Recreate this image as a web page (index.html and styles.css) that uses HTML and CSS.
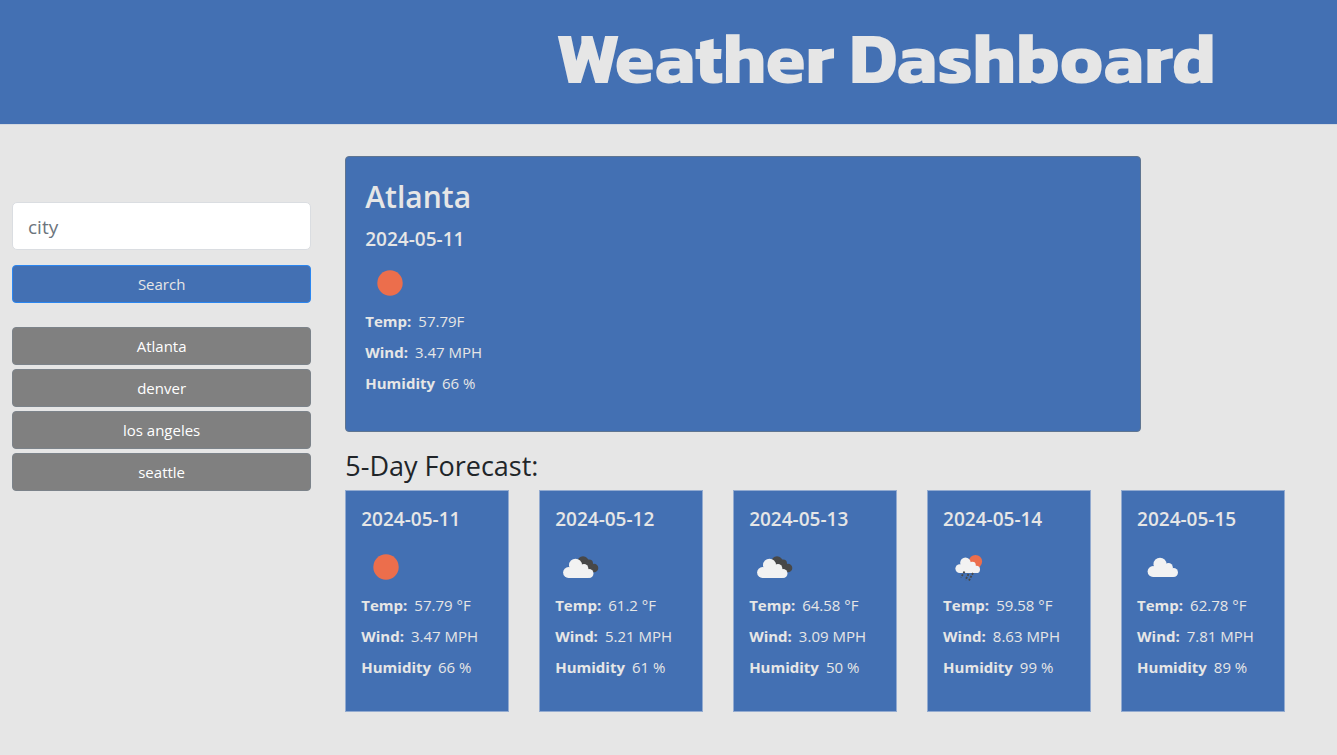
FILE: index.html
```html
<!DOCTYPE html>
<html lang="en">
<head>
<meta charset="utf-8">
<meta name="viewport" content="width=device-width, initial-scale=1">
<title>Weather Dashboard</title>
<link rel="stylesheet" href="styles.css">
</head>
<body>
<svg class="sprite" aria-hidden="true">
  <defs>
    <g id="puff"><circle cx="16" cy="29.500" r="5.400"/><circle cx="23" cy="22.200" r="6.500"/><circle cx="31.500" cy="25.300" r="4.300"/><circle cx="36.500" cy="30.500" r="4.500"/><path d="M16 35V27l3-5h8l5 2 4 5.500V35z"/></g>
  </defs>
  <symbol id="sun" viewBox="0 0 50 50"><circle cx="25" cy="25" r="12.7" fill="#ec6e4c"/></symbol>
  <symbol id="cloud" viewBox="0 0 50 50"><use href="#puff" fill="#f2f2f2"/></symbol>
  <symbol id="clouds" viewBox="0 0 50 50"><g fill="#484848"><circle cx="28" cy="20" r="5.800"/><circle cx="34" cy="21.500" r="4"/><circle cx="39" cy="26" r="4.300"/><path d="M27 20l8-1 5 11H28z"/></g><use href="#puff" fill="#f2f2f2" transform="translate(-2.500 1)"/></symbol>
  <symbol id="rain" viewBox="0 0 50 50"><circle cx="32.500" cy="19.500" r="6.600" fill="#ec6e4c"/><use href="#puff" fill="#f2f2f2" transform="translate(3.800 2.700) scale(.81)"/><path stroke="#484848" stroke-width="1.800" stroke-dasharray="2 1.300" fill="none" d="M21.500 29.500l-3.500 6M25.500 32l-3 6M30 31l-4 7.500"/></symbol>
</svg>
<header class="site-header"><h1 class="site-title">Weather Dashboard</h1></header>
<div class="layout">
  <aside class="sidebar">
    <form class="search">
      <input class="city-input" type="text" placeholder="city" aria-label="city">
      <button class="btn btn-search" type="button">Search</button>
    </form>
    <div class="history">
      <button class="btn" type="button">Atlanta</button>
      <button class="btn" type="button">denver</button>
      <button class="btn" type="button">los angeles</button>
      <button class="btn" type="button">seattle</button>
    </div>
  </aside>
  <main class="content">
    <section class="current">
      <h2 class="city">Atlanta</h2>
      <h3 class="date">2024-05-11</h3>
      <svg class="icon"><use href="#sun"/></svg>
      <p class="stat"><b>Temp:</b><span>57.79F</span></p>
      <p class="stat"><b>Wind:</b><span>3.47 MPH</span></p>
      <p class="stat"><b>Humidity</b><span>66 %</span></p>
    </section>
    <h2 class="forecast-title">5-Day Forecast:</h2>
    <section class="forecast">
      <article class="day">
        <h3 class="date">2024-05-11</h3>
        <svg class="icon"><use href="#sun"/></svg>
        <p class="stat"><b>Temp:</b><span>57.79 °F</span></p>
        <p class="stat"><b>Wind:</b><span>3.47 MPH</span></p>
        <p class="stat"><b>Humidity</b><span>66 %</span></p>
      </article>
      <article class="day">
        <h3 class="date">2024-05-12</h3>
        <svg class="icon"><use href="#clouds"/></svg>
        <p class="stat"><b>Temp:</b><span>61.2 °F</span></p>
        <p class="stat"><b>Wind:</b><span>5.21 MPH</span></p>
        <p class="stat"><b>Humidity</b><span>61 %</span></p>
      </article>
      <article class="day">
        <h3 class="date">2024-05-13</h3>
        <svg class="icon"><use href="#clouds"/></svg>
        <p class="stat"><b>Temp:</b><span>64.58 °F</span></p>
        <p class="stat"><b>Wind:</b><span>3.09 MPH</span></p>
        <p class="stat"><b>Humidity</b><span>50 %</span></p>
      </article>
      <article class="day">
        <h3 class="date">2024-05-14</h3>
        <svg class="icon"><use href="#rain"/></svg>
        <p class="stat"><b>Temp:</b><span>59.58 °F</span></p>
        <p class="stat"><b>Wind:</b><span>8.63 MPH</span></p>
        <p class="stat"><b>Humidity</b><span>99 %</span></p>
      </article>
      <article class="day">
        <h3 class="date">2024-05-15</h3>
        <svg class="icon"><use href="#cloud"/></svg>
        <p class="stat"><b>Temp:</b><span>62.78 °F</span></p>
        <p class="stat"><b>Wind:</b><span>7.81 MPH</span></p>
        <p class="stat"><b>Humidity</b><span>89 %</span></p>
      </article>
    </section>
  </main>
</div>
</body>
</html>
```
FILE: styles.css
```css
* { box-sizing: border-box; }
body {
  margin: 0;
  background: #e6e6e6;
  color: #212529;
  font-family: "Segoe UI", "Open Sans", "Noto Sans", sans-serif;
  font-size: 15px;
  line-height: 23px;
}
h1, h2, h3, p { margin: 0; }
.sprite { position: absolute; width: 0; height: 0; }
.site-header {
  padding: 9px 0 18px 32.5%;
  background: #4370b3;
  border-bottom: 1px solid #d3d8e0;
}
.site-title {
  color: #e6e6e6;
  font-family: "Kanit", "Open Sans", sans-serif;
  font-size: 72px;
  font-weight: 700;
  line-height: 97px;
  text-align: center;
  white-space: nowrap;
}
.layout { display: grid; grid-template-columns: 1fr 3fr; }
.sidebar { padding: 77px 23px 0 12px; }
.search { display: grid; gap: 15px; }
.city-input {
  width: 100%;
  height: 48px;
  padding: 9px 15px 8px;
  border: 1px solid #dadde1;
  border-radius: 5px;
  background: #fff;
  color: #495057;
  font: inherit;
  font-size: 19px;
}
.city-input::placeholder { color: #6c757d; opacity: 1; }
.btn {
  height: 38px;
  padding: 1px 12px 0;
  border: 1px solid #7c838a;
  border-radius: 4px;
  background: #808080;
  color: #fff;
  font: inherit;
}
.btn-search { border-color: #2b86f0; background: #4370b3; color: #e6e6e6; }
.history { display: grid; gap: 4px; margin-top: 24px; }
.content { padding: 31px 52px 43px 11px; }
.current {
  width: 84.7%;
  padding: 22px 19px 28px;
  border: 1px solid #5f7591;
  border-radius: 4px;
  background: #4370b3;
  color: #e6e6e6;
}
.city { margin-bottom: 12px; font-size: 30px; font-weight: 600; line-height: 36px; }
.date { font-size: 19px; font-weight: 600; line-height: 24px; }
.icon { display: block; width: 50px; height: 50px; }
.current .icon { margin: 7px 0 2px; }
.stat { display: flex; gap: 7px; margin-bottom: 8px; white-space: nowrap; }
.stat b { font-weight: 700; }
.forecast-title { margin-top: 17px; font-size: 27px; font-weight: 500; line-height: 34px; }
.forecast { display: grid; grid-template-columns: repeat(5, 1fr); gap: 30px; margin-top: 7px; }
.day {
  padding: 16px 15px 24px;
  border: 1px solid #93abd0;
  background: #4370b3;
  color: #e6e6e6;
}
.day .icon { margin: 11px 0 2px; }
```
